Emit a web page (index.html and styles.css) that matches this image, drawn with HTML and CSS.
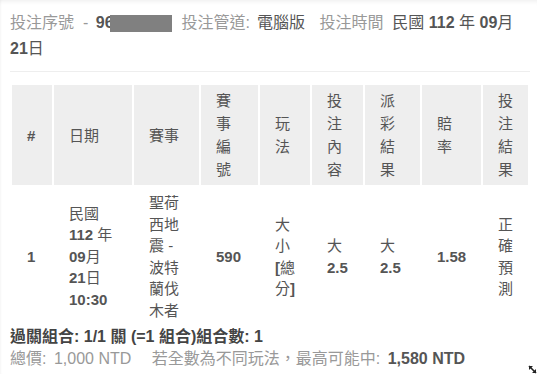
FILE: index.html
```html
<!DOCTYPE html>
<html lang="zh-Hant">
<head>
<meta charset="utf-8">
<link rel="stylesheet" href="styles.css">
</head>
<body>
<div class="panel">
  <p class="info">
    <span class="label">投注序號</span> <span class="label dash">-</span> <b class="val">96</b><span class="redact"></span>
    <span class="label">投注管道:</span> <span class="val channel">電腦版</span>
    <span class="label time">投注時間</span> <span class="val date">民國 <b>112</b> 年 <b>09</b>月 <b>21</b>日</span>
  </p>
  <div class="rule"></div>
  <table class="bets">
    <thead>
      <tr>
        <th class="c1">#</th>
        <th class="c2">日期</th>
        <th class="c3">賽事</th>
        <th class="c4">賽事編號</th>
        <th class="c5">玩法</th>
        <th class="c6">投注內容</th>
        <th class="c7">派彩結果</th>
        <th class="c8">賠率</th>
        <th class="c9">投注結果</th>
      </tr>
    </thead>
    <tbody>
      <tr>
        <td><b>1</b></td>
        <td>民國 <b>112</b> 年 <b>09</b>月 <b>21</b>日 <b>10:30</b></td>
        <td>聖荷西地震 - 波特蘭伐木者</td>
        <td><b>590</b></td>
        <td>大小<b>[</b>總分<b>]</b></td>
        <td>大 <b>2.5</b></td>
        <td>大 <b>2.5</b></td>
        <td><b>1.58</b></td>
        <td class="result">正確預測</td>
      </tr>
    </tbody>
  </table>
  <p class="combo">過關組合: 1/1 關 (=1 組合)組合數: 1</p>
  <p class="total">
    <span class="label">總價:</span> <span class="label amount">1,000 NTD</span>
    <span class="label gap">若全數為不同玩法，最高可能中:</span> <b class="val win">1,580 NTD</b>
  </p>
</div>
<svg class="cursor" width="9" height="9" viewBox="0 0 9 9" aria-hidden="true">
  <path d="M1 1 L8 8" stroke="#222" stroke-width="1.6" fill="none"/>
  <path d="M1 1 L5 1 L1 5 Z M8 8 L4 8 L8 4 Z" fill="#222"/>
</svg>
</body>
</html>
```

FILE: styles.css
```css
html, body {
  margin: 0;
  padding: 0;
  background: #fff;
}
body {
  position: relative;
  width: 537px;
  height: 374px;
  overflow: hidden;
  font-family: "Liberation Sans", "Noto Sans CJK TC", sans-serif;
  font-size: 16px;
  color: #555;
  box-shadow: inset 0 5px 5px -4px rgba(0, 0, 0, 0.08), inset 2px 0 3px -2px rgba(0, 0, 0, 0.08);
}
.panel {
  padding: 10px 7px 0 10px;
}
.info {
  margin: 0;
  line-height: 26px;
}
.label {
  color: #999;
}
.val {
  color: #555;
}
.dash {
  margin: 0 3px 0 4.5px;
}
.channel {
  margin-left: 2.5px;
}
.time {
  margin-left: 10px;
}
.date {
  margin-left: 4.5px;
}
.redact {
  display: inline-block;
  width: 62px;
  height: 17px;
  background: #808080;
  vertical-align: -4px;
  margin: 0 5.5px 0 -4px;
}
.rule {
  height: 1px;
  background: #eee;
  margin: 9px 0 11px;
}
.bets {
  border-collapse: separate;
  border-spacing: 2px;
  table-layout: fixed;
  width: 520px;
  font-size: 15px;
}
.bets th,
.bets td {
  box-sizing: border-box;
  text-align: left;
  vertical-align: middle;
  padding: 5px 14.5px 5px 15px;
}
.bets th {
  background: #eee;
  font-weight: normal;
  line-height: 23px;
  padding-top: 4px;
  padding-bottom: 4px;
}
.bets th.c1 { font-weight: bold; }
.bets td {
  line-height: 21.5px;
}
.c1 { width: 40px; }
.c2 { width: 78px; }
.c3 { width: 65px; }
.c4 { width: 57px; }
.c5 { width: 50px; }
.c6 { width: 51px; }
.c7 { width: 55px; }
.c8 { width: 59px; }
.c9 { width: 45px; }
.result {
  color: #555;
}
.combo {
  margin: -2px 0 0;
  line-height: 22px;
  font-weight: bold;
  color: #444;
}
.total {
  margin: 0;
  line-height: 22px;
}
.amount {
  margin-left: 3px;
}
.gap {
  margin-left: 16px;
}
.win {
  margin-left: 3px;
}
.cursor {
  position: absolute;
  right: 0;
  bottom: 0;
}
```
